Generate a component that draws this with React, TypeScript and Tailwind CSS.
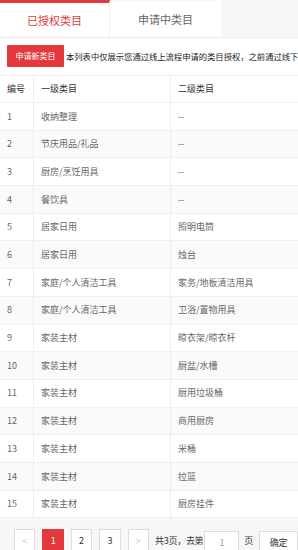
import React from "react";

const rows: [string, string, string][] = [
  ["1", "收纳整理", "--"],
  ["2", "节庆用品/礼品", "--"],
  ["3", "厨房/烹饪用具", "--"],
  ["4", "餐饮具", "--"],
  ["5", "居家日用", "照明电筒"],
  ["6", "居家日用", "烛台"],
  ["7", "家庭/个人清洁工具", "家务/地板清洁用具"],
  ["8", "家庭/个人清洁工具", "卫浴/置物用具"],
  ["9", "家装主材", "晾衣架/晾衣杆"],
  ["10", "家装主材", "厨盆/水槽"],
  ["11", "家装主材", "厨用垃圾桶"],
  ["12", "家装主材", "商用厨房"],
  ["13", "家装主材", "米桶"],
  ["14", "家装主材", "拉篮"],
  ["15", "家装主材", "厨房挂件"],
];

export default function App() {
  return (
    <div
      className="w-[298px] h-[550px] overflow-hidden bg-white text-[#333]"
      style={{ fontFamily: '"Noto Sans CJK SC", "Noto Sans", sans-serif' }}
    >
      {/* Tabs */}
      <div className="flex h-[38px] bg-[#f7f7f7] border-b border-[#ececec]">
        <div className="w-[110px] bg-white border-t-[3px] border-[#e4393c] border-r border-r-[#eee] flex items-center justify-center text-[11px] text-[#e4393c]">
          已授权类目
        </div>
        <div className="w-[111px] mt-[1px] bg-white flex items-center justify-center text-[11px] text-[#666]">
          申请中类目
        </div>
      </div>

      {/* Action row */}
      <div className="flex items-center h-[36px] pl-[7px] whitespace-nowrap overflow-hidden">
        <div className="shrink-0 w-[57px] h-[22px] bg-[#e4393c] text-white text-[8px] flex items-center justify-center rounded-[1px]">
          申请新类目
        </div>
        <div className="ml-[2px] text-[8.3px] text-[#222] leading-none">
          本列表中仅展示您通过线上流程申请的类目授权，之前通过线下流程申请的类目授权不在此展示
        </div>
      </div>

      {/* Table */}
      <div className="mt-[1px] overflow-hidden">
        <div className="w-[400px] border-t border-[#eee]">
          <div className="flex h-[27px] border-b border-[#eee] text-[9px] text-[#333] bg-white">
            <div className="w-[34px] shrink-0 border-r border-[#eee] pl-[7px] flex items-center">编号</div>
            <div className="w-[137px] shrink-0 border-r border-[#eee] pl-[7px] flex items-center">一级类目</div>
            <div className="flex-1 pl-[7px] flex items-center">二级类目</div>
          </div>
          {rows.map(([n, a, b], i) => (
            <div
              key={n}
              className={`flex h-[27.7px] border-b border-[#f0f0f0] text-[9px] text-[#666] ${
                i % 2 === 1 ? "bg-[#fafafa]" : "bg-white"
              }`}
            >
              <div className="w-[34px] shrink-0 border-r border-[#eee] pl-[7px] flex items-center">{n}</div>
              <div className="w-[137px] shrink-0 border-r border-[#eee] pl-[7px] flex items-center">{a}</div>
              <div className="flex-1 pl-[7px] flex items-center">{b}</div>
            </div>
          ))}
        </div>
      </div>

      {/* Pagination */}
      <div className="bg-[#f7f7f7] h-[40px] pt-[11px] pl-[14px] flex items-start gap-[7px] text-[9px]">
        <div className="w-[22px] h-[22px] bg-white border border-[#ddd] flex items-center justify-center text-[#ccc] text-[10px]">
          &lt;
        </div>
        <div className="w-[22px] h-[22px] bg-[#e4393c] border border-[#e4393c] flex items-center justify-center text-white">
          1
        </div>
        <div className="w-[22px] h-[22px] bg-white border border-[#ddd] flex items-center justify-center text-[#333]">
          2
        </div>
        <div className="w-[22px] h-[22px] bg-white border border-[#ddd] flex items-center justify-center text-[#333]">
          3
        </div>
        <div className="w-[22px] h-[22px] bg-white border border-[#ddd] flex items-center justify-center text-[#ccc] text-[10px]">
          &gt;
        </div>
        <div className="flex items-center h-[22px] ml-[-1px] text-[#333] whitespace-nowrap tracking-[-0.3px]">
          共3页，去第
          <div className="ml-[1px] w-[35px] h-[22px] mt-[4px] bg-white border border-[#ddd] flex items-center justify-center text-[#999]">
            1
          </div>
          <span className="ml-[5px]">页</span>
          <div className="ml-[6px] w-[39px] h-[22px] mt-[4px] bg-white border border-[#ddd] rounded-[1px] flex items-center justify-center text-[#333]">
            确定
          </div>
        </div>
      </div>
    </div>
  );
}
